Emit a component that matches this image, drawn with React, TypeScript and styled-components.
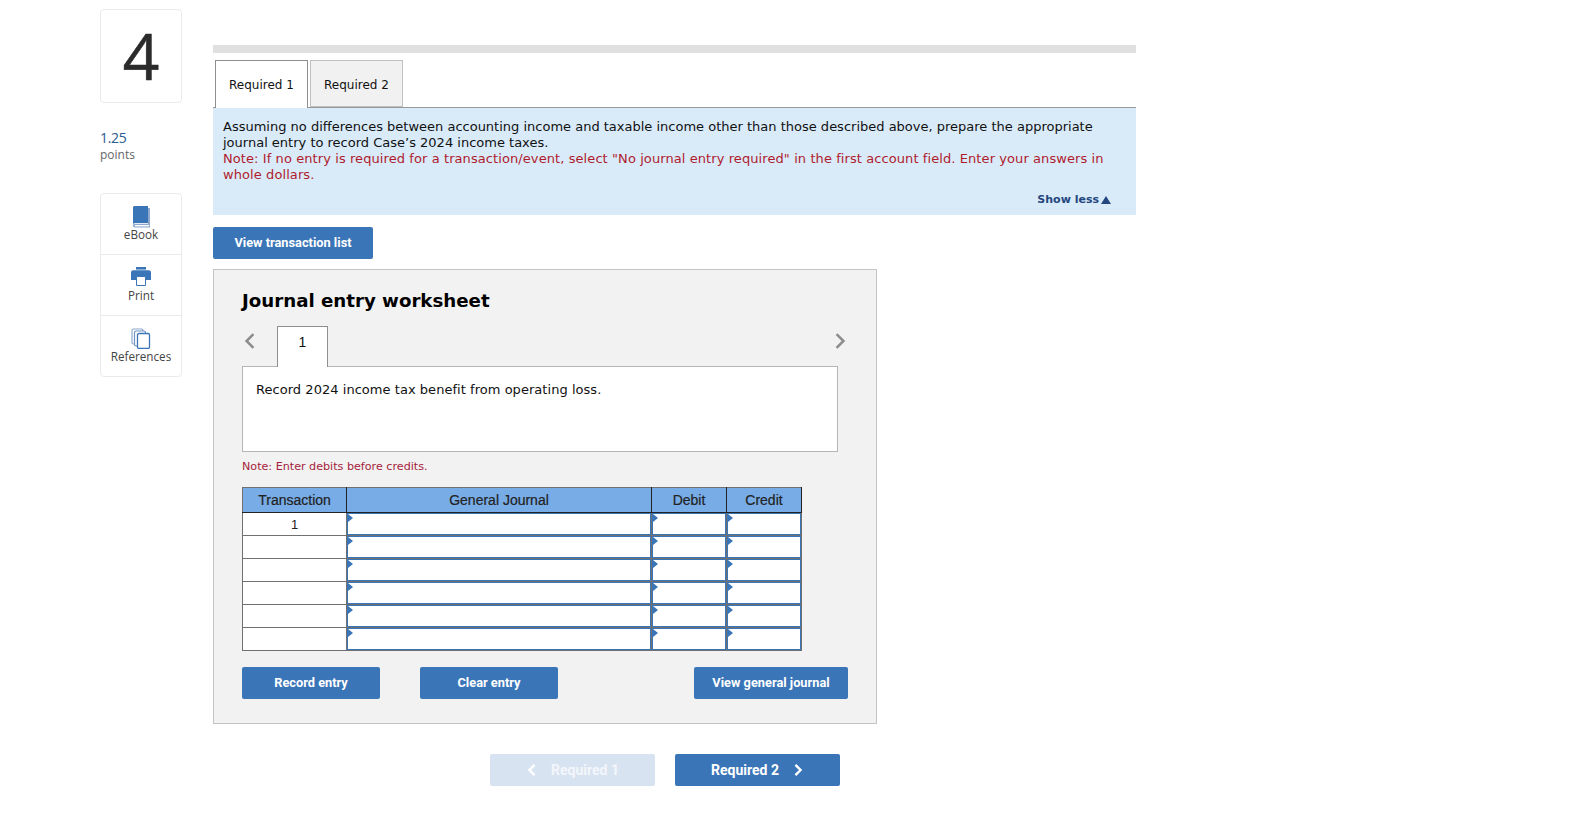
import React from "react";
import styled, { createGlobalStyle } from "styled-components";

const GlobalStyle = createGlobalStyle`
  html, body { margin: 0; padding: 0; background: #fff; }
  body { font-family: "DejaVu Sans", Verdana, sans-serif; }
`;

const rows = ["1", "", "", "", "", ""];

const BookIcon = () => (
  <svg width="20" height="22" viewBox="0 0 20 22">
    <path d="M2 1.5 C2 .7 2.7 0 3.5 0 H17 V17 H4.5 C3 17 2 17.6 2 19 Z" fill="#3a75b8" />
    <path d="M17 2 H19 V21.5 H4 C2.8 21.5 2 20.6 2 19.5 C2 18.4 2.8 17.8 4 17.8 H17 Z" fill="#8fa9cc" />
    <path d="M4 19 H18 V20.4 H4 Z" fill="#fff" />
  </svg>
);

const PrintIcon = () => (
  <svg width="20" height="19" viewBox="0 0 20 19">
    <path d="M5 0 H15 V2.6 H5 Z" fill="#3a75b8" />
    <path d="M2 3.2 H18 C19 3.2 20 4.2 20 5.2 V13 H0 V5.2 C0 4.2 1 3.2 2 3.2 Z" fill="#3a75b8" />
    <path d="M5.5 9.5 H14.5 V18.5 H5.5 Z" fill="#fff" stroke="#3a75b8" />
  </svg>
);

const CopiesIcon = () => (
  <svg width="20" height="21" viewBox="0 0 20 21" fill="#fff">
    <rect x="1" y="1" width="11" height="15" rx="1.5" stroke="#8fa9cc" strokeWidth="1.2" />
    <rect x="3.5" y="3" width="11" height="15" rx="1.5" stroke="#6f93c4" strokeWidth="1.2" />
    <rect x="6.5" y="5.5" width="12" height="15" rx="1.5" stroke="#3a75b8" strokeWidth="1.3" />
  </svg>
);

const Chevron = ({ dir, size = 14, color = "#fff", width = 2.8 }: { dir: "left" | "right"; size?: number; color?: string; width?: number }) => (
  <svg width={size} height={size} viewBox="0 0 14 14" fill="none">
    <path d={dir === "left" ? "M10 1 L4 7 L10 13" : "M4 1 L10 7 L4 13"} stroke={color} strokeWidth={width} />
  </svg>
);

export default function App() {
  return (
    <Page>
      <GlobalStyle />
      <Side>
        <NumberCard>4</NumberCard>
        <Points>
          <PointsValue>1.25</PointsValue>
          <PointsLabel>points</PointsLabel>
        </Points>
        <Tools>
          <Tool><ToolIcon><BookIcon /></ToolIcon>eBook</Tool>
          <Tool><ToolIcon><PrintIcon /></ToolIcon>Print</Tool>
          <Tool><ToolIcon><CopiesIcon /></ToolIcon>References</Tool>
        </Tools>
      </Side>
      <Main>
        <ProgressBar />
        <Tabs>
          <Tab $active>Required 1</Tab>
          <Tab>Required 2</Tab>
        </Tabs>
        <Instructions>
          <div>
            Assuming no differences between accounting income and taxable income other than those described above, prepare the appropriate journal entry to record Case’s 2024 income taxes.
          </div>
          <RedNote>
            Note: If no entry is required for a transaction/event, select "No journal entry required" in the first account field. Enter your answers in whole dollars.
          </RedNote>
          <ShowLess>Show less<Triangle /></ShowLess>
        </Instructions>
        <ListButton>View transaction list</ListButton>
        <Worksheet>
          <Title>Journal entry worksheet</Title>
          <PagerRow>
            <PagerArrow><Chevron dir="left" size={16} color="#8d8d8d" width={2.2} /></PagerArrow>
            <PageTab>1</PageTab>
            <PagerSpacer />
            <PagerArrow><Chevron dir="right" size={16} color="#8d8d8d" width={2.2} /></PagerArrow>
          </PagerRow>
          <DescriptionBox>Record 2024 income tax benefit from operating loss.</DescriptionBox>
          <SmallNote>Note: Enter debits before credits.</SmallNote>
          <JournalTable>
            <colgroup>
              <Column $width={104} />
              <Column $width={305} />
              <Column $width={75} />
              <Column $width={75} />
            </colgroup>
            <thead>
              <tr>
                <HeadCell>Transaction</HeadCell>
                <HeadCell>General Journal</HeadCell>
                <HeadCell>Debit</HeadCell>
                <HeadCell>Credit</HeadCell>
              </tr>
            </thead>
            <tbody>
              {rows.map((r, i) => (
                <tr key={i}>
                  <TxCell>{r}</TxCell>
                  <InputCell />
                  <InputCell />
                  <InputCell />
                </tr>
              ))}
            </tbody>
          </JournalTable>
          <Actions>
            <ActionButton>Record entry</ActionButton>
            <ActionButton>Clear entry</ActionButton>
            <WideButton>View general journal</WideButton>
          </Actions>
        </Worksheet>
        <BottomNav>
          <NavButton disabled>
            <Chevron dir="left" size={12} />
            <span>Required 1</span>
          </NavButton>
          <NavButton>
            <span>Required 2</span>
            <Chevron dir="right" size={12} />
          </NavButton>
        </BottomNav>
      </Main>
    </Page>
  );
}

const Page = styled.div`
  display: flex;
  align-items: flex-start;
  width: 1580px;
  height: 815px;
  padding: 9px 0 0 100px;
  box-sizing: border-box;
  overflow: hidden;
`;

const Side = styled.aside`
  width: 82px;
  flex: none;
  font-family: "Open Sans", sans-serif;
`;

const NumberCard = styled.div`
  height: 94px;
  box-sizing: border-box;
  border: 1px solid #eaeaea;
  border-radius: 4px;
  display: flex;
  align-items: center;
  justify-content: center;
  font-family: "Open Sans", sans-serif;
  font-size: 64px;
  font-weight: 500;
  -webkit-text-stroke: 0.6px #2b2b2b;
  color: #2b2b2b;
  line-height: 1;
`;

const Points = styled.div`
  margin-top: 26px;
  height: 64px;
`;

const PointsValue = styled.div`
  font-size: 14px;
  line-height: 18px;
  color: #2d5a8e;
  letter-spacing: -0.3px;
`;

const PointsLabel = styled.div`
  font-size: 12px;
  line-height: 15px;
  color: #666;
`;

const Tools = styled.div`
  border: 1px solid #eaeaea;
  border-radius: 4px;
  height: 184px;
  box-sizing: border-box;
  display: flex;
  flex-direction: column;
`;

const Tool = styled.div`
  flex: 1;
  display: flex;
  flex-direction: column;
  align-items: center;
  font-size: 11.7px;
  line-height: 14px;
  color: #444;
  padding-top: 12px;
  box-sizing: border-box;
  & + & {
    border-top: 1px solid #eaeaea;
  }
`;

const ToolIcon = styled.div`
  height: 21px;
  display: flex;
  align-items: flex-start;
`;

const Main = styled.main`
  width: 923px;
  margin-left: 31px;
  padding-top: 36px;
  flex: none;
`;

const ProgressBar = styled.div`
  height: 8px;
  background: #e0e0e0;
`;

const Tabs = styled.div`
  display: flex;
  gap: 2px;
  margin-top: 7px;
  padding-left: 2px;
  height: 47px;
`;

const Tab = styled.div<{ $active?: boolean }>`
  width: 93px;
  height: ${(p) => (p.$active ? "48px" : "47px")};
  box-sizing: border-box;
  padding-top: ${(p) => (p.$active ? "0" : "2px")};
  border: 1px solid ${(p) => (p.$active ? "#8e8e8e" : "#c0c0c0")};
  border-bottom: ${(p) => (p.$active ? "none" : "1px solid #c0c0c0")};
  background: ${(p) => (p.$active ? "#fff" : "#f1f1f1")};
  display: flex;
  align-items: center;
  justify-content: center;
  font-size: 12px;
  color: #111;
  position: relative;
  z-index: 1;
`;

const Instructions = styled.section`
  height: 108px;
  box-sizing: border-box;
  border-top: 1px solid #999;
  background: #d9ebf9;
  padding: 11px 10px 0 10px;
  font-size: 13px;
  line-height: 16px;
  color: #111;
`;

const RedNote = styled.div`
  color: #b01c2e;
  letter-spacing: 0.085px;
`;

const ShowLess = styled.div`
  display: flex;
  justify-content: flex-end;
  align-items: center;
  gap: 2px;
  margin-top: 9px;
  padding-right: 15px;
  font-size: 11px;
  font-weight: bold;
  color: #24477f;
`;

const Triangle = styled.span`
  width: 0;
  height: 0;
  border-left: 5px solid transparent;
  border-right: 5px solid transparent;
  border-bottom: 8px solid #24477f;
`;

const BaseButton = styled.button`
  border: none;
  border-radius: 2px;
  background: #3a75b8;
  color: #fff;
  font-family: "Roboto", "Liberation Sans", sans-serif;
  font-weight: bold;
  font-size: 12.8px;
  height: 32px;
  padding: 0 0 2px;
`;

const ListButton = styled(BaseButton)`
  display: block;
  width: 160px;
  margin-top: 12px;
`;

const Worksheet = styled.section`
  margin-top: 10px;
  width: 664px;
  height: 455px;
  box-sizing: border-box;
  border: 1px solid #c4c4c4;
  background: #f2f2f2;
  padding: 19px 28px 0;
`;

const Title = styled.h2`
  margin: 0;
  font-size: 18.2px;
  line-height: 24px;
  font-weight: bold;
  color: #000;
`;

const PagerRow = styled.div`
  display: flex;
  align-items: flex-start;
  margin-top: 13px;
  height: 40px;
  width: 606px;
  position: relative;
  z-index: 1;
`;

const PagerArrow = styled.div`
  width: 16px;
  height: 30px;
  display: flex;
  align-items: center;
  justify-content: center;
`;

const PageTab = styled.div`
  width: 51px;
  height: 41px;
  margin-left: 19px;
  box-sizing: border-box;
  border: 1px solid #8e8e8e;
  border-bottom: none;
  background: #fff;
  font-size: 14px;
  line-height: 30px;
  text-align: center;
  color: #111;
  font-family: "Liberation Sans", sans-serif;
`;

const PagerSpacer = styled.div`
  flex: 1;
`;

const DescriptionBox = styled.div`
  width: 596px;
  height: 86px;
  box-sizing: border-box;
  border: 1px solid #b5b5b5;
  background: #fff;
  padding: 15px 13px;
  font-size: 13px;
  line-height: 16px;
  letter-spacing: 0.04px;
  color: #111;
`;

const SmallNote = styled.div`
  margin-top: 8px;
  font-size: 11.15px;
  line-height: 14px;
  color: #a51c3c;
`;

const JournalTable = styled.table`
  margin-top: 13px;
  width: 560px;
  table-layout: fixed;
  border-collapse: collapse;
  font-family: "Liberation Sans", sans-serif;
  border: 1px solid #707070;
`;

const Column = styled.col<{ $width: number }>`
  width: ${(p) => p.$width}px;
`;

const HeadCell = styled.th`
  height: 24px;
  padding: 0;
  background: #78ace6;
  border: 1px solid #222;
  border-top-color: #707070;
  font-size: 14px;
  font-weight: normal;
  -webkit-text-stroke: 0.2px #222;
  color: #222;
  &:first-child { border-left-color: #707070; }
  &:last-child { border-right-color: #222; }
`;

const TxCell = styled.td`
  height: 22px;
  padding: 0;
  background: #fff;
  border: 1px solid #707070;
  text-align: center;
  font-size: 13px;
  color: #222;
`;

const InputCell = styled.td`
  height: 22px;
  padding: 0;
  background: #fff;
  border: 1px solid #707070;
  box-shadow: inset 0 0 0 1px #3a75b8;
  position: relative;
  &::before {
    content: "";
    position: absolute;
    left: 1px;
    top: 1px;
    border-top: 4px solid transparent;
    border-bottom: 4px solid transparent;
    border-left: 5px solid #3a75b8;
  }
`;

const Actions = styled.div`
  display: flex;
  margin-top: 16px;
  width: 606px;
  gap: 40px;
`;

const ActionButton = styled(BaseButton)`
  width: 138px;
`;

const WideButton = styled(BaseButton)`
  width: 154px;
  margin-left: auto;
`;

const BottomNav = styled.nav`
  display: flex;
  gap: 20px;
  margin-top: 30px;
  margin-left: 277px;
`;

const NavButton = styled(BaseButton)`
  width: 165px;
  font-size: 14px;
  padding: 0;
  display: flex;
  align-items: center;
  justify-content: center;
  gap: 13px;
  &:disabled {
    background: #d8e3f1;
    color: #f3f6fa;
  }
`;
